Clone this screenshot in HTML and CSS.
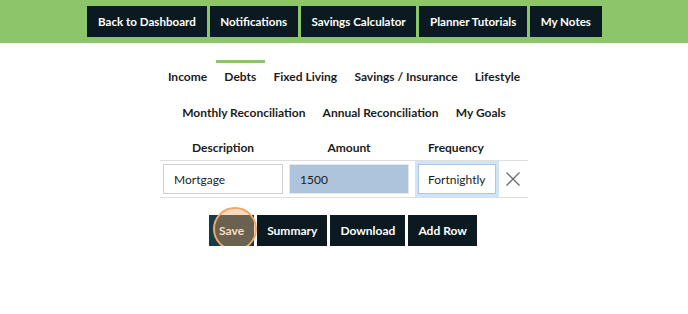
FILE: index.html
```html
<!DOCTYPE html>
<html>
<head>
<meta charset="utf-8">
<link rel="stylesheet" href="styles.css">
</head>
<body>
<header class="topbar">
  <nav class="topnav">
    <a class="btn">Back to Dashboard</a>
    <a class="btn">Notifications</a>
    <a class="btn">Savings Calculator</a>
    <a class="btn">Planner Tutorials</a>
    <a class="btn">My Notes</a>
  </nav>
</header>
<main class="content">
  <div class="tabs">
    <div class="tab-row">
      <a class="tab">Income</a>
      <a class="tab active">Debts</a>
      <a class="tab">Fixed Living</a>
      <a class="tab">Savings / Insurance</a>
      <a class="tab">Lifestyle</a>
    </div>
    <div class="tab-row">
      <a class="tab">Monthly Reconciliation</a>
      <a class="tab">Annual Reconciliation</a>
      <a class="tab">My Goals</a>
    </div>
  </div>
  <table class="grid">
    <thead>
      <tr>
        <th class="c-desc">Description</th>
        <th class="c-amt">Amount</th>
        <th class="c-freq">Frequency</th>
        <th class="c-del"></th>
      </tr>
    </thead>
    <tbody>
      <tr>
        <td><div class="field">Mortgage</div></td>
        <td><div class="field amount">1500</div></td>
        <td><div class="field select">Fortnightly</div></td>
        <td class="del">
          <svg width="16" height="16" viewBox="0 0 16 16"><path d="M1.5 1.5 L14.5 14.5 M14.5 1.5 L1.5 14.5" stroke="#6d6d6d" stroke-width="1.3" fill="none"/></svg>
        </td>
      </tr>
    </tbody>
  </table>
  <div class="actions">
    <a class="btn save">Save<span class="click"></span></a>
    <a class="btn">Summary</a>
    <a class="btn">Download</a>
    <a class="btn">Add Row</a>
  </div>
</main>
</body>
</html>
```

FILE: styles.css
```css
body {
  margin: 0;
  font-family: Lato, "Open Sans", sans-serif;
  background: #fff;
  color: #1c1c1c;
}
.topbar {
  background: #8dc56a;
  height: 43px;
  display: flex;
  justify-content: center;
}
.topnav {
  display: flex;
  gap: 3px;
  padding-top: 6px;
  padding-left: 1px;
}
.btn {
  display: flex;
  align-items: center;
  height: 31px;
  padding: 0 10px;
  background: #0b1a20;
  color: #fff;
  font-size: 12px;
  font-weight: 700;
  white-space: nowrap;
  box-sizing: border-box;
}
.topnav .btn {
  font-size: 11.6px;
  padding: 0 10.7px;
}
.content {
  width: 368px;
  margin: 0 auto;
}
.tabs {
  margin-top: 17px;
}
.tab-row {
  display: flex;
  justify-content: center;
}
.tab {
  height: 36px;
  padding: 6px 8.6px 0;
  line-height: 16px;
  font-size: 12px;
  font-weight: 700;
  color: #1c1c1c;
  border-top: 3px solid transparent;
  box-sizing: border-box;
  white-space: nowrap;
}
.tab.active {
  border-top-color: #8dc56a;
}
.grid {
  width: 368px;
  border-collapse: collapse;
  margin-top: 2px;
}
.grid th {
  font-size: 12px;
  font-weight: 700;
  height: 26px;
  padding: 0;
  text-align: center;
  vertical-align: middle;
}
.c-desc { width: 126px; }
.c-amt { width: 126px; }
.c-freq { width: 88px; }
.c-del { width: 28px; }
.grid td {
  border-top: 1px solid #dedede;
  border-bottom: 1px solid #dedede;
  padding: 3px 3px;
  height: 30px;
}
.field {
  height: 30px;
  box-sizing: border-box;
  border: 1px solid #cfcfcf;
  display: flex;
  align-items: center;
  padding-left: 10px;
  font-size: 12px;
  color: #1c1c1c;
  background: #fff;
}
.field.amount {
  background: #adc4dc;
  border-color: #e4e8ec;
}
.field.select {
  padding-left: 9px;
  border-color: #a9c6ea;
  box-shadow: 0 0 0 3px #d3e3f6;
  margin: 0 1px 0 3px;
}
.del {
  vertical-align: middle;
}
.del svg {
  display: block;
  margin-left: 2px;
}
.actions {
  display: flex;
  justify-content: center;
  gap: 3px;
  margin-top: 17px;
  padding-right: 2px;
}
.btn.save {
  position: relative;
  background: #163a4a;
}
.click {
  position: absolute;
  left: 4px;
  top: -8px;
  width: 44px;
  height: 44px;
  border-radius: 50%;
  box-sizing: border-box;
  border: 2px solid #f2a564;
  background: rgba(245, 160, 90, 0.38);
}
```
